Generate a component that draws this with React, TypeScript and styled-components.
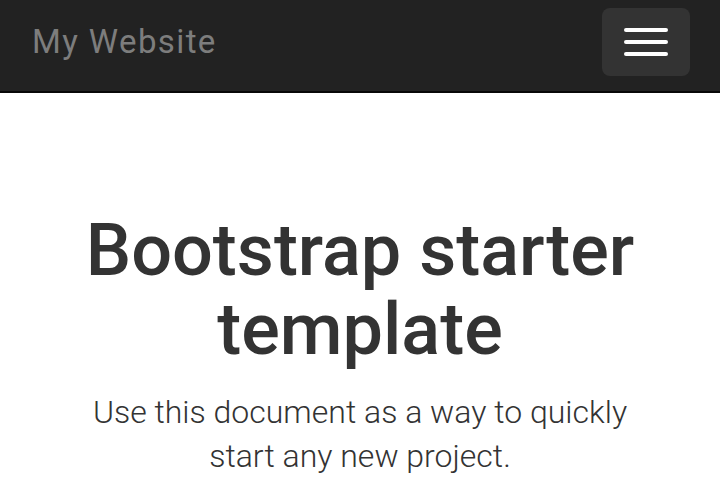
import React from "react";
import styled, { createGlobalStyle } from "styled-components";

const Global = createGlobalStyle`
  html, body { margin: 0; padding: 0; background: #fff; }
  body { font-family: Roboto, "Noto Sans", "Liberation Sans", sans-serif; color: #333; }
  * { box-sizing: border-box; }
`;

const Navbar = styled.nav`
  height: 93px;
  background: #222;
  border-bottom: 2px solid #080808;
  display: flex;
  align-items: flex-start;
  justify-content: space-between;
  padding: 0 30px 0 32px;
`;

const Brand = styled.a`
  font-size: 33px;
  font-weight: 400;
  letter-spacing: 1.4px;
  color: #7d7d7d;
  text-decoration: none;
  line-height: 1;
  margin-top: 25px;
`;

const Toggle = styled.button`
  margin-top: 8px;
  width: 88px;
  height: 68px;
  background: #333;
  border: none;
  border-radius: 8px;
  display: flex;
  flex-direction: column;
  align-items: center;
  justify-content: center;
  gap: 8px;
  padding: 0;
`;

const Bar = styled.span`
  display: block;
  width: 44px;
  height: 4px;
  border-radius: 2px;
  background: #fff;
`;

const Main = styled.main`
  padding: 118px 60px 0;
  text-align: center;
`;

const Title = styled.h1`
  margin: 0;
  font-size: 72px;
  font-weight: 500;
  line-height: 79px;
  color: #333;
`;

const Lead = styled.p`
  margin: 21px 0 0;
  font-size: 32px;
  font-weight: 300;
  line-height: 44px;
  color: #333;
`;

export default function App() {
  return (
    <>
      <Global />
      <Navbar>
        <Brand href="#">My Website</Brand>
        <Toggle aria-label="Toggle navigation">
          <Bar />
          <Bar />
          <Bar />
        </Toggle>
      </Navbar>
      <Main>
        <Title>Bootstrap starter template</Title>
        <Lead>
          Use this document as a way to quickly start any new project.
        </Lead>
      </Main>
    </>
  );
}
